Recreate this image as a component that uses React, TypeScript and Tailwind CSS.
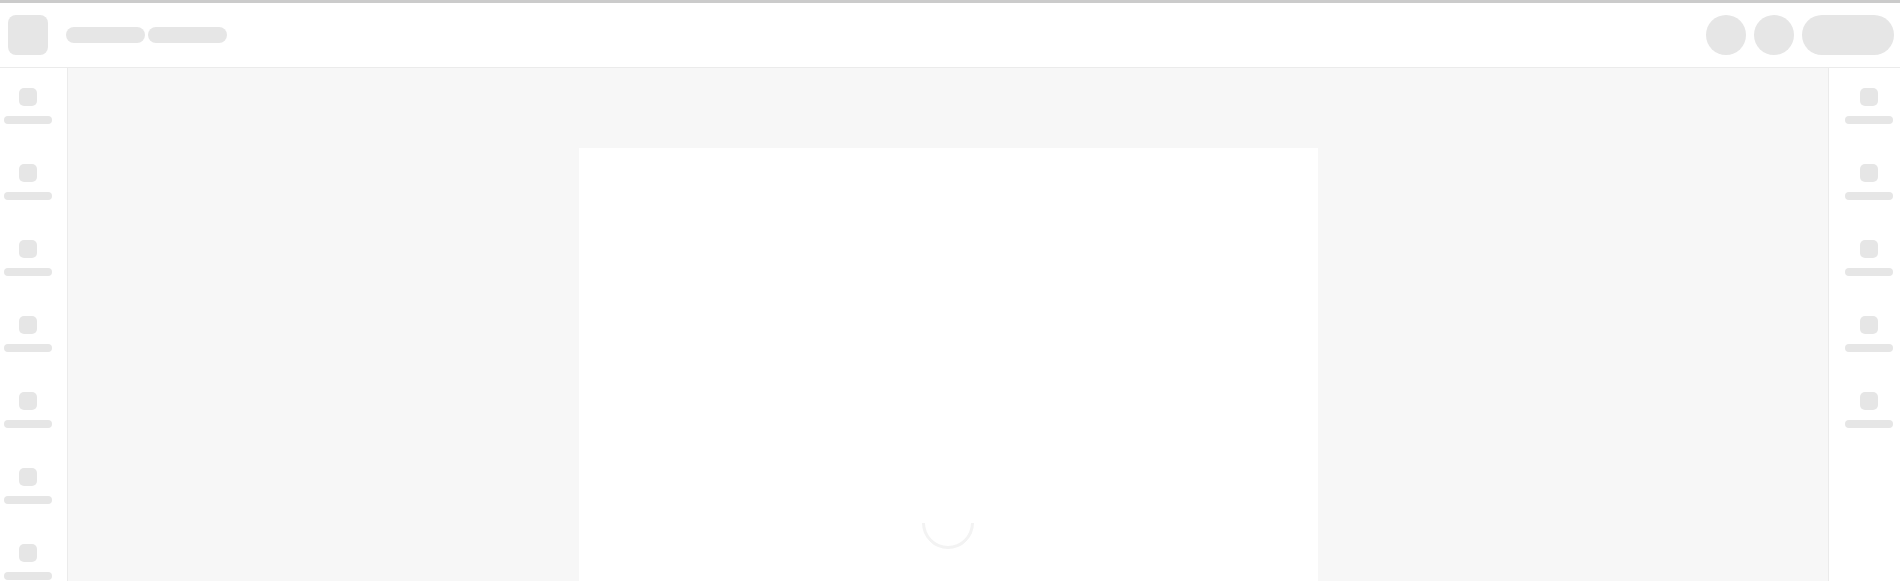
import React from 'react';

function SideItem() {
  return (
    <div className="flex w-12 flex-col items-center gap-[10px]">
      <div className="h-[18px] w-[18px] rounded-[5px] bg-[#e6e6e6]" />
      <div className="h-2 w-12 rounded-full bg-[#e6e6e6]" />
    </div>
  );
}

export default function App() {
  return (
    <div className="flex h-[581px] w-full flex-col overflow-hidden bg-white font-['Liberation_Sans',sans-serif]">
      {/* Top strip */}
      <div className="h-[3px] w-full bg-[#cbcbcb]" />

      {/* Header */}
      <header className="flex h-[65px] items-center justify-between border-b border-[#ebebeb] pl-2 pr-[6px]">
        <div className="flex items-center">
          <div className="h-10 w-10 rounded-lg bg-[#e6e6e6]" />
          <div className="ml-[18px] flex gap-[3px]">
            <div className="h-4 w-[79px] rounded-full bg-[#e6e6e6]" />
            <div className="h-4 w-[79px] rounded-full bg-[#e6e6e6]" />
          </div>
        </div>
        <div className="flex items-center gap-2">
          <div className="h-10 w-10 rounded-full bg-[#e6e6e6]" />
          <div className="h-10 w-10 rounded-full bg-[#e6e6e6]" />
          <div className="h-10 w-[92px] rounded-full bg-[#e6e6e6]" />
        </div>
      </header>

      <div className="flex min-h-0 flex-1">
        {/* Left rail */}
        <aside className="flex w-[68px] shrink-0 flex-col gap-10 border-r border-[#ebebeb] pl-1 pt-5">
          {Array.from({ length: 7 }).map((_, i) => (
            <SideItem key={i} />
          ))}
        </aside>

        {/* Canvas */}
        <main className="flex min-w-0 flex-1 justify-center bg-[#f7f7f7] pt-20">
          <div className="relative h-[600px] w-[739px] shrink-0 bg-white">
            {/* loading spinner */}
            <div className="absolute left-1/2 top-[349px] h-[52px] w-[52px] -translate-x-1/2 -rotate-45 rounded-full border-[3px] border-transparent border-b-[#f3f3f3] border-l-[#f3f3f3]" />
          </div>
        </main>

        {/* Right rail */}
        <aside className="flex w-[72px] shrink-0 flex-col gap-10 border-l border-[#ebebeb] pl-4 pt-5">
          {Array.from({ length: 5 }).map((_, i) => (
            <SideItem key={i} />
          ))}
        </aside>
      </div>
    </div>
  );
}
